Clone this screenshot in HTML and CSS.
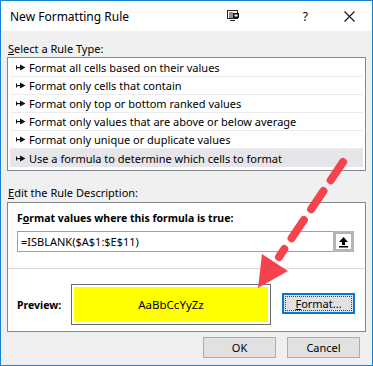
FILE: index.html
```html
<!DOCTYPE html>
<html>
<head>
<meta charset="utf-8">
<link rel="stylesheet" href="styles.css">
</head>
<body>
<div class="dialog">
  <div class="titlebar">
    <span class="title">New Formatting Rule</span>
    <svg class="ico-monitor" width="12" height="11" viewBox="0 0 12 11">
      <rect x="0.5" y="0.5" width="10" height="8" fill="none" stroke="#222"/>
      <line x1="3" y1="2" x2="3" y2="8" stroke="#222"/>
      <line x1="5" y1="2" x2="5" y2="8" stroke="#222"/>
      <rect x="6" y="3" width="6" height="5" fill="#111"/>
      <rect x="7.5" y="4.5" width="3" height="2" fill="#fff"/>
      <line x1="3" y1="10.5" x2="8" y2="10.5" stroke="#222"/>
    </svg>
    <span class="help">?</span>
    <svg class="ico-close" width="11" height="11" viewBox="0 0 11 11">
      <path d="M0.5 0.5 L10.5 10.5 M10.5 0.5 L0.5 10.5" stroke="#111" stroke-width="1.1" fill="none"/>
    </svg>
  </div>
  <div class="content">
    <div class="label label-top"><u>S</u>elect a Rule Type:</div>
    <div class="listbox">
      <div class="item"><svg class="bullet" width="10" height="7" viewBox="0 0 10 7"><rect x="0" y="1.5" width="1" height="4" fill="#111"/><rect x="0" y="3" width="5" height="1.2" fill="#111"/><path d="M4 0.5 L9.5 3.5 L4 6.5 Z" fill="#111"/></svg>Format all cells based on their values</div>
      <div class="item"><svg class="bullet" width="10" height="7" viewBox="0 0 10 7"><rect x="0" y="1.5" width="1" height="4" fill="#111"/><rect x="0" y="3" width="5" height="1.2" fill="#111"/><path d="M4 0.5 L9.5 3.5 L4 6.5 Z" fill="#111"/></svg>Format only cells that contain</div>
      <div class="item"><svg class="bullet" width="10" height="7" viewBox="0 0 10 7"><rect x="0" y="1.5" width="1" height="4" fill="#111"/><rect x="0" y="3" width="5" height="1.2" fill="#111"/><path d="M4 0.5 L9.5 3.5 L4 6.5 Z" fill="#111"/></svg>Format only top or bottom ranked values</div>
      <div class="item"><svg class="bullet" width="10" height="7" viewBox="0 0 10 7"><rect x="0" y="1.5" width="1" height="4" fill="#111"/><rect x="0" y="3" width="5" height="1.2" fill="#111"/><path d="M4 0.5 L9.5 3.5 L4 6.5 Z" fill="#111"/></svg>Format only values that are above or below average</div>
      <div class="item"><svg class="bullet" width="10" height="7" viewBox="0 0 10 7"><rect x="0" y="1.5" width="1" height="4" fill="#111"/><rect x="0" y="3" width="5" height="1.2" fill="#111"/><path d="M4 0.5 L9.5 3.5 L4 6.5 Z" fill="#111"/></svg>Format only unique or duplicate values</div>
      <div class="item selected"><svg class="bullet" width="10" height="7" viewBox="0 0 10 7"><rect x="0" y="1.5" width="1" height="4" fill="#111"/><rect x="0" y="3" width="5" height="1.2" fill="#111"/><path d="M4 0.5 L9.5 3.5 L4 6.5 Z" fill="#111"/></svg>Use a formula to determine which cells to format</div>
    </div>
    <div class="label label-edit"><u>E</u>dit the Rule Description:</div>
    <div class="desc">
      <div class="desc-top">
        <div class="bold">F<u>o</u>rmat values where this formula is true:</div>
        <div class="formula-row">
          <div class="formula">=ISBLANK($A$1:$E$11)</div>
          <div class="refbtn">
            <svg width="11" height="12" viewBox="0 0 11 12">
              <path d="M5.5 1 L10 6 L7 6 L7 9 L4 9 L4 6 L1 6 Z" fill="#000"/>
              <rect x="1" y="10" width="9" height="1.5" fill="#000"/>
            </svg>
          </div>
        </div>
      </div>
      <div class="desc-bottom">
        <div class="bold preview-label">Preview:</div>
        <div class="preview"><div class="preview-inner">AaBbCcYyZz</div></div>
        <div class="btn btn-format"><span class="focus"><u>F</u>ormat...</span></div>
      </div>
    </div>
    <div class="actions">
      <div class="btn">OK</div>
      <div class="btn">Cancel</div>
    </div>
  </div>
  <svg class="annot" width="373" height="366" viewBox="0 0 373 366">
    <line x1="343" y1="162" x2="279" y2="257" stroke="#f4434c" stroke-width="8" stroke-linecap="round" stroke-dasharray="22 13"/>
    <path d="M258 288 L262 254 L288 271 Z" fill="#f4434c"/>
  </svg>
</div>
</body>
</html>
```

FILE: styles.css
```css
html, body {
  margin: 0;
  padding: 0;
}
body {
  font-family: "Noto Sans", "Open Sans", sans-serif;
  font-size: 11px;
  color: #000;
}
.dialog {
  position: relative;
  width: 373px;
  height: 366px;
  box-sizing: border-box;
  border: 1px solid #1a82d6;
  background: #f0f0f0;
  display: flex;
  flex-direction: column;
  overflow: hidden;
}
.titlebar {
  height: 30px;
  background: #fff;
  display: flex;
  align-items: center;
  padding-left: 9px;
  flex-shrink: 0;
}
.title {
  font-size: 12px;
  flex: 1;
  color: #000;
}
.ico-monitor {
  margin-right: 64px;
  margin-top: -2px;
}
.help {
  font-size: 12px;
  margin-right: 36px;
}
.ico-close {
  margin-right: 17px;
}
.content {
  padding: 0 6px;
  display: flex;
  flex-direction: column;
}
.label {
  height: 16px;
  line-height: 16px;
  padding-left: 1px;
  flex-shrink: 0;
}
.label-top {
  margin-top: 10px;
}
.listbox {
  height: 114px;
  box-sizing: border-box;
  border: 1px solid #828790;
  background: #fff;
  padding: 1px 2px;
  flex-shrink: 0;
}
.item {
  height: 17px;
  border-bottom: 1px solid #ececec;
  display: flex;
  align-items: center;
  padding-left: 6px;
  white-space: nowrap;
}
.item.selected {
  background: #e5e5ea;
  border-bottom: none;
  height: 18px;
}
.bullet {
  margin-right: 3px;
}
.label-edit {
  margin-top: 14px;
}
.desc {
  margin-top: 1px;
  height: 130px;
  box-sizing: border-box;
  border: 1px solid #828790;
  background: #fff;
  display: flex;
  flex-direction: column;
  flex-shrink: 0;
}
.desc-top {
  height: 66px;
  flex-shrink: 0;
  border-bottom: 1px solid #d6d6d6;
  padding: 7px 9px 0 9px;
  box-sizing: border-box;
}
.bold {
  font-weight: 700;
  font-size: 10.5px;
  line-height: 16px;
}
.formula-row {
  margin-top: 5px;
  display: flex;
  width: 337px;
  height: 21px;
  box-sizing: border-box;
  border: 1px solid #a0a0a0;
}
.formula {
  flex: 1;
  line-height: 19px;
  padding-left: 3px;
}
.refbtn {
  width: 21px;
  height: 21px;
  margin: -1px -1px -1px 0;
  box-sizing: border-box;
  border: 3px solid #b5b5b5;
  background: #fff;
  display: flex;
  align-items: center;
  justify-content: center;
}
.desc-bottom {
  flex: 1;
  display: flex;
  align-items: flex-start;
  padding-left: 9px;
  padding-top: 15px;
}
.preview-label {
  width: 54px;
  margin-top: 13px;
}
.preview {
  width: 200px;
  height: 41px;
  box-sizing: border-box;
  border: 1px solid #6d6d6d;
  padding: 2px;
  background: #fff;
}
.preview-inner {
  height: 100%;
  background: #ffff00;
  display: flex;
  align-items: center;
  justify-content: center;
  font-size: 11.5px;
}
.btn {
  width: 73px;
  height: 21px;
  box-sizing: border-box;
  border: 1px solid #adadad;
  background: #e1e1e1;
  display: flex;
  align-items: center;
  justify-content: center;
}
.btn-format {
  margin-left: 11px;
  margin-top: 9px;
  border: 2px solid #0078d7;
  padding: 1px;
}
.btn-format .focus {
  width: 100%;
  height: 100%;
  box-sizing: border-box;
  border: 1px dotted #444;
  display: flex;
  align-items: center;
  justify-content: center;
}
.actions {
  display: flex;
  justify-content: flex-end;
  gap: 11px;
  margin-top: 5px;
  padding-right: 6px;
}
.annot {
  position: absolute;
  left: -1px;
  top: -1px;
  pointer-events: none;
}
```
